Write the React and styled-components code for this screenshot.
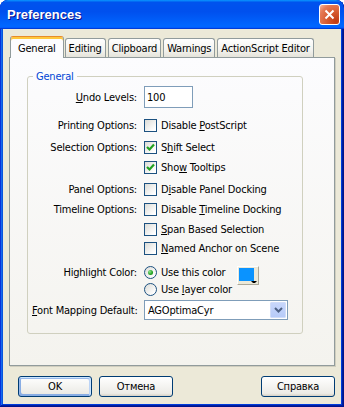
import React from 'react'
import styled, { createGlobalStyle } from 'styled-components'

const GlobalStyle = createGlobalStyle`
  html, body {
    margin: 0;
    padding: 0;
    background: #fff;
  }
  body {
    font-family: "DejaVu Sans Condensed", "Liberation Sans", Arial, sans-serif;
    font-size: 11px;
    letter-spacing: -0.2px;
    color: #000;
  }
`

const Window = styled.div`
  width: 344px;
  height: 407px;
  box-sizing: border-box;
  display: flex;
  flex-direction: column;
  padding: 0 3px 3px;
  background: #0855dd;
  border-radius: 8px 8px 0 0;
  overflow: hidden;
  box-shadow: inset -1px -1px #00138c, inset 1px 1px #0831d9,
    inset -2px -2px #001ea0, inset 2px 2px #166aee,
    inset -3px -3px #003bda, inset 3px 3px #0855dd;
`

const TitleBar = styled.div`
  height: 29px;
  flex-shrink: 0;
  margin: 0 -3px;
  padding: 0 4px 0 7px;
  display: flex;
  align-items: center;
  justify-content: space-between;
  border-radius: 8px 8px 0 0;
  background: linear-gradient(180deg, #0997ff, #0053ee 8%, #0050ee 40%, #06f 88%, #06f 93%, #005bff 95%, #003dd7 96%, #003dd7);
`

const Title = styled.div`
  color: #fff;
  font-family: "Liberation Sans", Arial, sans-serif;
  font-weight: bold;
  font-size: 13px;
  letter-spacing: 0;
  text-shadow: 1px 1px #0f1089;
  padding-bottom: 1px;
`

const CloseButton = styled.button`
  width: 21px;
  height: 21px;
  padding: 0;
  border: 1px solid #fff;
  border-radius: 3px;
  display: flex;
  align-items: center;
  justify-content: center;
  background: radial-gradient(circle at 85% 85%, #c03a14 0%, #d65a30 40%, #e57a55 75%, #f5b8a0 100%);
`

const Body = styled.div`
  flex: 1;
  background: #ece9d8;
  padding: 7px 6px 7px;
  display: flex;
  flex-direction: column;
`

const TabList = styled.div`
  height: 21px;
  display: flex;
  align-items: flex-end;
  gap: 2px;
  padding-left: 1px;
`

const Tab = styled.div`
  position: relative;
  z-index: ${p => (p.$active ? 1 : 0)};
  box-sizing: border-box;
  height: ${p => (p.$active ? 22 : 19)}px;
  margin-bottom: ${p => (p.$active ? -1 : 0)}px;
  margin-right: ${p => (p.$active ? -1 : 0)}px;
  padding: ${p => (p.$active ? '2px 7px 0' : '0 3px')};
  display: flex;
  align-items: center;
  white-space: nowrap;
  border: 1px solid #919b9c;
  border-bottom: none;
  border-radius: 3px 3px 0 0;
  border-top-color: ${p => (p.$active ? '#e68b2c' : '#919b9c')};
  background: ${p => (p.$active
    ? '#fcfcfe'
    : 'linear-gradient(180deg, #fff, #f3f3ef 60%, #e5e3da)')};
  box-shadow: ${p => (p.$active ? 'inset 0 2px #ffc83c' : 'none')};
`

const Panel = styled.div`
  height: 309px;
  box-sizing: border-box;
  border: 1px solid #919b9c;
  background: linear-gradient(180deg, #fcfcfe, #f4f3ee);
  box-shadow: 1px 1px 0 #d0cebf;
  padding: 12px 0 0 17px;
`

const GroupBox = styled.fieldset`
  width: 276px;
  box-sizing: border-box;
  margin: 0;
  padding: 3px 0 12px 4px;
  border: 1px solid #d0d0bf;
  border-radius: 3px;
`

const Legend = styled.legend`
  color: #0046d5;
  line-height: 13px;
  padding: 0 3px;
  margin-left: 1px;
`

const Row = styled.div`
  display: grid;
  grid-template-columns: 105px auto;
  column-gap: 7px;
  align-items: center;
  height: ${p => p.$h || 20}px;
  margin-top: ${p => p.$mt || 0}px;
`

const Label = styled.div`
  grid-column: 1;
  text-align: right;
  white-space: nowrap;
`

const Control = styled.div`
  grid-column: 2;
  display: flex;
  align-items: center;
  white-space: nowrap;
`

const TextInput = styled.div`
  width: 49px;
  height: 22px;
  box-sizing: border-box;
  border: 1px solid #7f9db9;
  background: #fff;
  padding-left: 2px;
  display: flex;
  align-items: center;
`

const Box = styled.span`
  width: 13px;
  height: 13px;
  box-sizing: border-box;
  flex-shrink: 0;
  margin-right: 4px;
  border: 1px solid #1c5180;
  border-radius: ${p => (p.$round ? '50%' : '0')};
  background: linear-gradient(135deg, #dcdcd7, #fff 85%);
  display: flex;
  align-items: center;
  justify-content: center;
`

const Dot = styled.span`
  width: 5px;
  height: 5px;
  border-radius: 50%;
  background: radial-gradient(circle at 35% 35%, #8ee58e, #21a121 60%, #1a8a1a);
`

const Swatch = styled.div`
  width: 22px;
  height: 19px;
  box-sizing: border-box;
  align-self: flex-start;
  margin: 7px 0 0 12px;
  border: 1px solid;
  border-color: #fff #aca899 #aca899 #fff;
  background: #ece9d8;
  display: flex;
  padding: 1px 0 0 1px;
`

const Select = styled.div`
  width: 144px;
  height: 20px;
  box-sizing: border-box;
  border: 1px solid #7f9db9;
  background: #fff;
  display: flex;
  align-items: center;
  justify-content: space-between;
  padding: 1px;
`

const SelectText = styled.span`
  padding-left: 2px;
`

const SelectArrow = styled.span`
  width: 16px;
  height: 16px;
  box-sizing: border-box;
  border: 1px solid #d0dcf8;
  border-radius: 1px;
  background: linear-gradient(180deg, #c7d6fb, #b7cbf8);
  display: flex;
  align-items: center;
  justify-content: center;
`

const ButtonRow = styled.div`
  margin-top: 10px;
  padding-left: 9px;
  display: flex;
  gap: 7px;
`

const Button = styled.button`
  width: 74px;
  height: 21px;
  padding: 0;
  font: inherit;
  letter-spacing: inherit;
  color: #000;
  border: 1px solid #003c74;
  border-radius: 3px;
  background: linear-gradient(180deg, #fff, #ecebe6 86%, #d6d0c5);
  margin-left: ${p => (p.$push ? 'auto' : '0')};
  box-shadow: ${p => (p.$default
    ? 'inset -1px 1px #cee7ff, inset 1px 2px #98b8ea, inset -2px 2px #bcd4f6, inset 1px -1px #89ade4, inset 2px -2px #89ade4'
    : 'none')};
`

const CheckMark = () => (
  <svg width="9" height="9" viewBox="0 0 9 9">
    <path d="M1 4 L3.5 6.5 L8 1.5" fill="none" stroke="#21a121" strokeWidth="2.2" />
  </svg>
)

const Check = ({ checked, children }) => (
  <Control>
    <Box>{checked && <CheckMark />}</Box>
    <span>{children}</span>
  </Control>
)

const Radio = ({ checked, children }) => (
  <>
    <Box $round>{checked && <Dot />}</Box>
    <span>{children}</span>
  </>
)

const tabs = ['General', 'Editing', 'Clipboard', 'Warnings', 'ActionScript Editor']

export default function App() {
  return (
    <Window>
      <GlobalStyle />
      <TitleBar>
        <Title>Preferences</Title>
        <CloseButton>
          <svg width="11" height="11" viewBox="0 0 11 11">
            <path d="M1.5 1.5 L9.5 9.5 M9.5 1.5 L1.5 9.5" stroke="#fff" strokeWidth="2" />
          </svg>
        </CloseButton>
      </TitleBar>
      <Body>
        <TabList>
          {tabs.map((t, i) => (
            <Tab key={t} $active={i === 0}>{t}</Tab>
          ))}
        </TabList>
        <Panel>
          <GroupBox>
            <Legend>General</Legend>
            <Row $h={22}>
              <Label><u>U</u>ndo Levels:</Label>
              <Control>
                <TextInput>100</TextInput>
              </Control>
            </Row>
            <Row $mt={7}>
              <Label>Printing Options:</Label>
              <Check>Disable <u>P</u>ostScript</Check>
            </Row>
            <Row $mt={2}>
              <Label>Selection Options:</Label>
              <Check checked>S<u>h</u>ift Select</Check>
            </Row>
            <Row>
              <Check checked>Sho<u>w</u> Tooltips</Check>
            </Row>
            <Row $mt={2}>
              <Label>Panel Options:</Label>
              <Check>D<u>i</u>sable Panel Docking</Check>
            </Row>
            <Row>
              <Label>Timeline Options:</Label>
              <Check>Disable <u>T</u>imeline Docking</Check>
            </Row>
            <Row>
              <Check><u>S</u>pan Based Selection</Check>
            </Row>
            <Row $mt={-1}>
              <Check><u>N</u>amed Anchor on Scene</Check>
            </Row>
            <Row $mt={1}>
              <Label>Highlight Color:</Label>
              <Control>
                <Radio checked>Use this color</Radio>
                <Swatch>
                  <svg width="18" height="15" viewBox="0 0 18 15">
                    <rect x="0" y="0" width="15" height="13" fill="#0a93ff" />
                    <path d="M12 13 L18 13 L15 16 Z" fill="#000" />
                  </svg>
                </Swatch>
              </Control>
            </Row>
            <Row>
              <Control>
                <Radio>Use <u>l</u>ayer color</Radio>
              </Control>
            </Row>
            <Row $h={22}>
              <Label><u>F</u>ont Mapping Default:</Label>
              <Control>
                <Select>
                  <SelectText>AGOptimaCyr</SelectText>
                  <SelectArrow>
                    <svg width="9" height="6" viewBox="0 0 9 6">
                      <path d="M1 1 L4.5 4.5 L8 1" fill="none" stroke="#4d6185" strokeWidth="2" />
                    </svg>
                  </SelectArrow>
                </Select>
              </Control>
            </Row>
          </GroupBox>
        </Panel>
        <ButtonRow>
          <Button $default>OK</Button>
          <Button>Отмена</Button>
          <Button $push>Справка</Button>
        </ButtonRow>
      </Body>
    </Window>
  )
}
